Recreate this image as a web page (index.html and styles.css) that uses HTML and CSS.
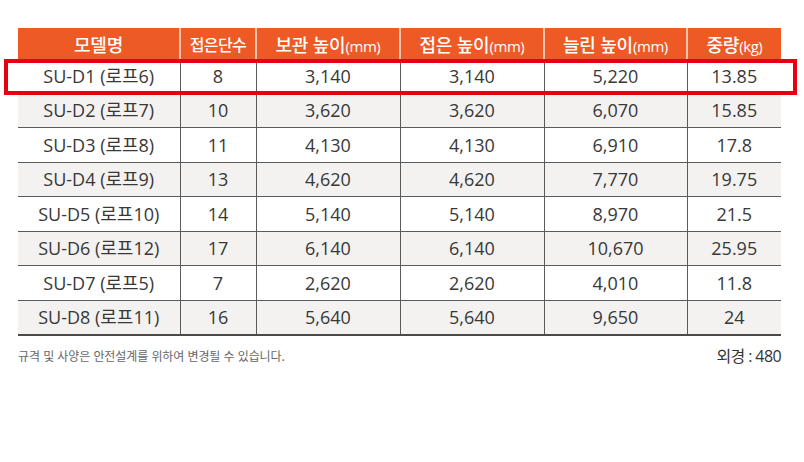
FILE: index.html
```html
<!DOCTYPE html>
<html lang="ko">
<head>
<meta charset="utf-8">
<title>사양표</title>
<link rel="stylesheet" href="styles.css">
</head>
<body>
<div class="page">
  <table class="spec">
    <colgroup>
      <col class="c1"><col class="c2"><col class="c3"><col class="c4"><col class="c5"><col class="c6">
    </colgroup>
    <thead>
      <tr>
        <th>모델명</th>
        <th class="narrow">접은단수</th>
        <th>보관 높이<span class="unit">(mm)</span></th>
        <th>접은 높이<span class="unit">(mm)</span></th>
        <th>늘린 높이<span class="unit">(mm)</span></th>
        <th>중량<span class="unit">(kg)</span></th>
      </tr>
    </thead>
    <tbody>
      <tr><td>SU-D1 (로프6)</td><td>8</td><td>3,140</td><td>3,140</td><td>5,220</td><td>13.85</td></tr>
      <tr><td>SU-D2 (로프7)</td><td>10</td><td>3,620</td><td>3,620</td><td>6,070</td><td>15.85</td></tr>
      <tr><td>SU-D3 (로프8)</td><td>11</td><td>4,130</td><td>4,130</td><td>6,910</td><td>17.8</td></tr>
      <tr><td>SU-D4 (로프9)</td><td>13</td><td>4,620</td><td>4,620</td><td>7,770</td><td>19.75</td></tr>
      <tr><td>SU-D5 (로프10)</td><td>14</td><td>5,140</td><td>5,140</td><td>8,970</td><td>21.5</td></tr>
      <tr><td>SU-D6 (로프12)</td><td>17</td><td>6,140</td><td>6,140</td><td>10,670</td><td>25.95</td></tr>
      <tr><td>SU-D7 (로프5)</td><td>7</td><td>2,620</td><td>2,620</td><td>4,010</td><td>11.8</td></tr>
      <tr><td>SU-D8 (로프11)</td><td>16</td><td>5,640</td><td>5,640</td><td>9,650</td><td>24</td></tr>
    </tbody>
  </table>
  <div class="notes">
    <p class="note">규격 및 사양은 안전설계를 위하여 변경될 수 있습니다.</p>
    <p class="size">외경 : 480</p>
  </div>
  <div class="highlight"></div>
</div>
</body>
</html>
```
FILE: styles.css
```css
html, body {
  margin: 0;
  padding: 0;
  background: #ffffff;
}

.page {
  position: relative;
  width: 804px;
  height: 462px;
  padding: 28px 0 0 18px;
  box-sizing: border-box;
  font-family: "Noto Sans CJK KR", "Noto Sans", sans-serif;
  color: #333333;
}

.spec {
  width: 763px;
  border-collapse: collapse;
  table-layout: fixed;
}

.c1 { width: 162px; }
.c2 { width: 76px; }
.c3 { width: 144px; }
.c4 { width: 144px; }
.c5 { width: 143px; }
.c6 { width: 94px; }

.spec th {
  height: 31px;
  padding: 0;
  background: #ee5a25;
  color: #ffffff;
  font-size: 18px;
  font-weight: 500;
  letter-spacing: -0.3px;
  border-left: 2px solid #f6c3ad;
  vertical-align: middle;
}

.spec th:first-child {
  border-left: none;
}

.spec th.narrow {
  font-size: 16px;
  letter-spacing: -0.6px;
}

.unit {
  font-family: "Open Sans", "Noto Sans CJK KR", sans-serif;
  font-size: 15px;
  letter-spacing: -0.4px;
}

.spec td {
  height: 33.5px;
  padding: 0;
  text-align: center;
  vertical-align: middle;
  font-family: "Open Sans", "Noto Sans CJK KR", sans-serif;
  font-size: 18px;
  font-weight: 400;
  color: #383838;
  border-top: 1px solid #5a5a5a;
  border-left: 1px solid #5a5a5a;
  line-height: 1;
}

.spec td:first-child {
  border-left: none;
}

.spec tbody tr:first-child td {
  border-top: none;
}

.spec tbody tr:nth-child(even) td {
  background: #f3f2f1;
}

.spec tbody tr:last-child td {
  border-bottom: 2px solid #4a4a4a;
}

.notes {
  width: 763px;
  display: flex;
  justify-content: space-between;
  align-items: center;
  margin-top: 7px;
}

.notes p {
  margin: 0;
}

.note {
  font-size: 12px;
  color: #666666;
  letter-spacing: -0.1px;
}

.size {
  font-family: "Open Sans", "Noto Sans CJK KR", sans-serif;
  font-size: 16px;
  color: #333333;
  letter-spacing: -0.6px;
}

.highlight {
  position: absolute;
  left: 4px;
  top: 59px;
  width: 793px;
  height: 36px;
  box-sizing: border-box;
  border: 4px solid #e60012;
}
```
